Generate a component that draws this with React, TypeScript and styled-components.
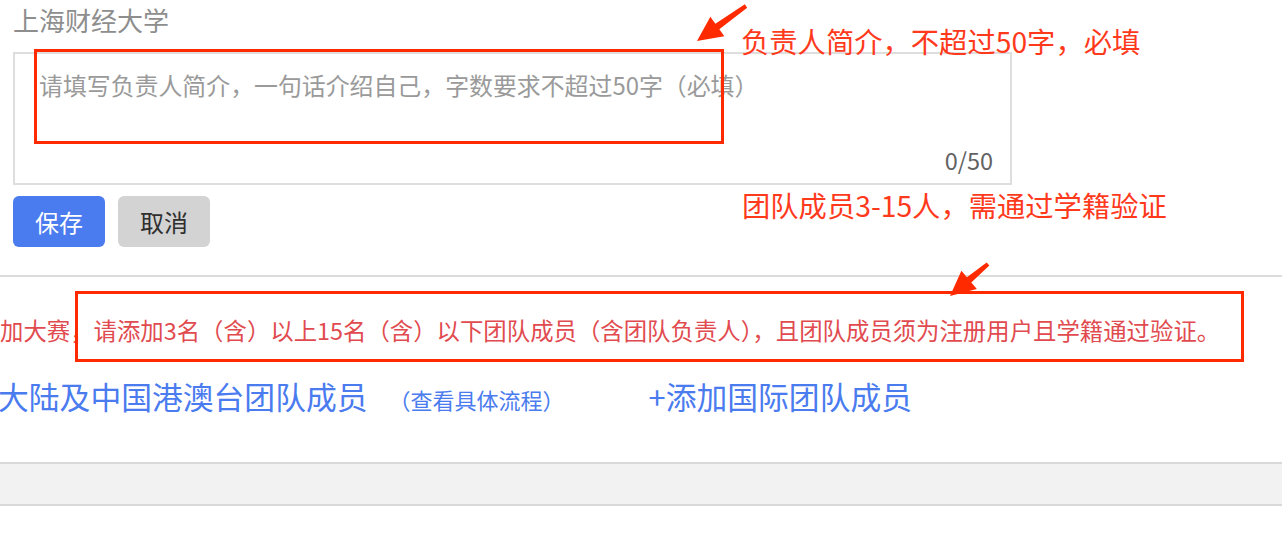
import React from "react";
import styled, { createGlobalStyle } from "styled-components";

const GlobalStyle = createGlobalStyle`
  html, body { margin: 0; padding: 0; background: #ffffff; }
  body { font-family: "Noto Sans CJK SC", "Noto Sans", sans-serif; }
  * { box-sizing: border-box; }
`;

const Page = styled.div`
  position: relative;
  width: 1282px;
  height: 536px;
  overflow: hidden;
  background: #fff;
`;

const FormSection = styled.section`
  padding-left: 13px;
  display: flex;
  flex-direction: column;
  align-items: flex-start;
`;

const SchoolTitle = styled.div`
  height: 40px;
  line-height: 40px;
  font-size: 26px;
  color: #8e8e8e;
`;

const TextBox = styled.div`
  margin-top: 12px;
  width: 999px;
  height: 133px;
  border: 2px solid #dedede;
  padding: 14px 17px 8px 24px;
  display: flex;
  flex-direction: column;
  justify-content: space-between;
`;

const Placeholder = styled.div`
  font-size: 23.9px;
  line-height: 34px;
  color: #9a9a9a;
`;

const Counter = styled.div`
  align-self: flex-end;
  font-size: 23.5px;
  line-height: 30px;
  color: #626262;
`;

const ButtonRow = styled.div`
  margin-top: 11px;
  display: flex;
  gap: 13px;
`;

const Button = styled.button<{ $primary?: boolean }>`
  width: 92px;
  height: 51px;
  border: none;
  border-radius: 6px;
  font-family: inherit;
  font-size: 24px;
  padding: 0;
  background: ${(p) => (p.$primary ? "#4a7bef" : "#d3d3d3")};
  color: ${(p) => (p.$primary ? "#ffffff" : "#2f2f2f")};
`;

const Divider = styled.div`
  margin-top: 28px;
  height: 2px;
  background: #dcdcdc;
`;

const Notice = styled.div`
  margin-top: 36px;
  font-size: 23.4px;
  line-height: 34px;
  color: #e14b4f;
  white-space: nowrap;
`;

const LinkRow = styled.div`
  margin-top: 29px;
  display: flex;
  align-items: baseline;
  white-space: nowrap;
  margin-left: -2px;
`;

const BigLink = styled.span<{ $ml?: number }>`
  font-size: 30.8px;
  line-height: 40px;
  color: #4a7bef;
  margin-left: ${(p) => p.$ml ?? 0}px;
`;

const SmallLink = styled.span`
  font-size: 22px;
  color: #4a7bef;
  margin-left: 21px;
`;

const GrayBand = styled.div`
  margin-top: 46px;
  height: 44px;
  background: #f2f2f2;
  border-top: 2px solid #d9d9d9;
  border-bottom: 2px solid #d9d9d9;
`;

/* ---------- annotation overlay ---------- */

const RedBox = styled.div<{ $x: number; $y: number; $w: number; $h: number }>`
  position: absolute;
  left: ${(p) => p.$x}px;
  top: ${(p) => p.$y}px;
  width: ${(p) => p.$w}px;
  height: ${(p) => p.$h}px;
  border: 3px solid #ff2a00;
  pointer-events: none;
`;

const Note = styled.div<{ $x: number; $y: number }>`
  position: absolute;
  left: ${(p) => p.$x}px;
  top: ${(p) => p.$y}px;
  font-size: 28.3px;
  line-height: 40px;
  color: #ff3a1c;
  white-space: nowrap;
`;

const ArrowSvg = styled.svg`
  position: absolute;
  left: 0;
  top: 0;
  overflow: visible;
  pointer-events: none;
`;

function Arrow({ x1, y1, x2, y2 }: { x1: number; y1: number; x2: number; y2: number }) {
  const dx = x2 - x1;
  const dy = y2 - y1;
  const len = Math.hypot(dx, dy);
  const ux = dx / len;
  const uy = dy / len;
  const px = -uy;
  const py = ux;
  const headLen = 25;
  const headHalf = 12;
  const shaft = 3.4;
  const bx = x2 - ux * headLen;
  const by = y2 - uy * headLen;
  const pts = [
    [x1 + px * shaft * 0.6, y1 + py * shaft * 0.6],
    [bx + px * shaft, by + py * shaft],
    [bx + px * headHalf, by + py * headHalf],
    [x2, y2],
    [bx - px * headHalf, by - py * headHalf],
    [bx - px * shaft, by - py * shaft],
    [x1 - px * shaft * 0.6, y1 - py * shaft * 0.6],
  ]
    .map((p) => p.join(","))
    .join(" ");
  return (
    <ArrowSvg width={1} height={1}>
      <polygon points={pts} fill="#ff2a00" />
    </ArrowSvg>
  );
}

export default function App() {
  return (
    <Page>
      <GlobalStyle />
      <FormSection>
        <SchoolTitle>上海财经大学</SchoolTitle>
        <TextBox>
          <Placeholder>请填写负责人简介，一句话介绍自己，字数要求不超过50字（必填）</Placeholder>
          <Counter>0/50</Counter>
        </TextBox>
        <ButtonRow>
          <Button $primary>保存</Button>
          <Button>取消</Button>
        </ButtonRow>
      </FormSection>
      <Divider />
      <Notice>加大赛，请添加3名（含）以上15名（含）以下团队成员（含团队负责人），且团队成员须为注册用户且学籍通过验证。</Notice>
      <LinkRow>
        <BigLink>大陆及中国港澳台团队成员</BigLink>
        <SmallLink>（查看具体流程）</SmallLink>
        <BigLink $ml={84}>+添加国际团队成员</BigLink>
      </LinkRow>
      <GrayBand />

      <RedBox $x={34} $y={49} $w={690} $h={95} />
      <RedBox $x={75} $y={291} $w={1169} $h={71} />
      <Note $x={741} $y={21}>负责人简介，不超过50字，必填</Note>
      <Note $x={742} $y={185}>团队成员3-15人，需通过学籍验证</Note>
      <Arrow x1={746} y1={6} x2={697} y2={41} />
      <Arrow x1={988} y1={264} x2={950} y2={296} />
    </Page>
  );
}
